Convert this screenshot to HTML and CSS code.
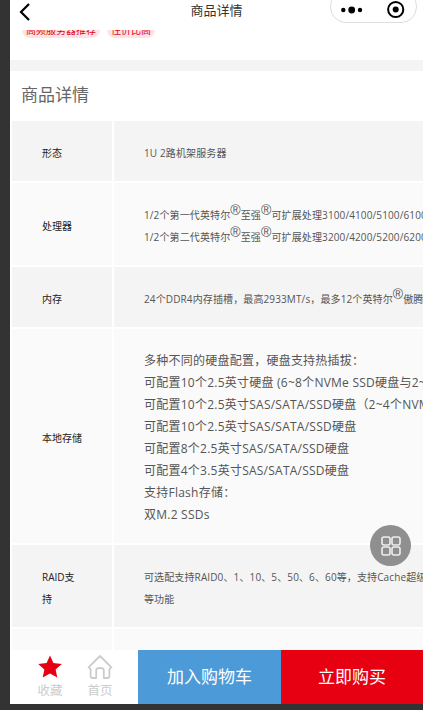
FILE: index.html
```html
<!DOCTYPE html>
<html lang="zh-CN">
<head>
    <meta charset="UTF-8">
    <meta name="viewport" content="width=device-width, initial-scale=1.0">
    <title>商品详情</title>
    <link rel="stylesheet" href="styles.css">
</head>
<body>
    <div class="screen">
        <!-- 顶部导航 -->
        <div class="nav">
            <svg class="nav-back" width="12" height="20" viewBox="0 0 12 20">
                <path d="M10 2 L2 10 L10 18" fill="none" stroke="#000" stroke-width="2.2"/>
            </svg>
            <div class="nav-title">商品详情</div>
            <div class="capsule">
                <svg width="70" height="20" viewBox="0 0 70 20">
                    <circle cx="3.3" cy="10" r="2.2" fill="#000"/>
                    <circle cx="11.7" cy="10" r="3.4" fill="#000"/>
                    <circle cx="20" cy="10" r="2.2" fill="#000"/>
                    <circle cx="55.7" cy="9.5" r="7.6" fill="none" stroke="#000" stroke-width="2"/>
                    <circle cx="55.7" cy="9.5" r="3" fill="#000"/>
                </svg>
            </div>
        </div>

        <div class="main">
            <div class="tags">
                <span class="tag">高频服务器推荐</span>
                <span class="tag">性价比高</span>
            </div>

            <div class="detail">
                <h2>商品详情</h2>
                <table class="spec-table">
                    <tr>
                        <th>形态</th>
                        <td>1U 2路机架服务器</td>
                    </tr>
                    <tr>
                        <th>处理器</th>
                        <td>
                            1/2个第一代英特尔<sup>®</sup>至强<sup>®</sup>可扩展处理3100/4100/5100/6100系列<br>
                            1/2个第二代英特尔<sup>®</sup>至强<sup>®</sup>可扩展处理3200/4200/5200/6200系列
                        </td>
                    </tr>
                    <tr>
                        <th>内存</th>
                        <td>24个DDR4内存插槽，最高2933MT/s，最多12个英特尔<sup>®</sup>傲腾内存</td>
                    </tr>
                    <tr>
                        <th>本地存储</th>
                        <td class="big-text">
                            多种不同的硬盘配置，硬盘支持热插拔：<br>
                            可配置10个2.5英寸硬盘 (6~8个NVMe SSD硬盘与2~4个SAS/SATA硬盘)<br>
                            可配置10个2.5英寸SAS/SATA/SSD硬盘（2~4个NVMe SSD硬盘）<br>
                            可配置10个2.5英寸SAS/SATA/SSD硬盘<br>
                            可配置8个2.5英寸SAS/SATA/SSD硬盘<br>
                            可配置4个3.5英寸SAS/SATA/SSD硬盘<br>
                            支持Flash存储：<br>
                            双M.2 SSDs
                        </td>
                    </tr>
                    <tr>
                        <th>RAID支持</th>
                        <td>可选配支持RAID0、1、10、5、50、6、60等，支持Cache超级电容保护<br>等功能</td>
                    </tr>
                    <tr>
                        <th></th>
                        <td></td>
                    </tr>
                </table>
            </div>
        </div>

        <!-- 悬浮按钮 -->
        <div class="float-btn">
            <svg width="20" height="20" viewBox="0 0 20 20" fill="none" stroke="#eee" stroke-width="1.6">
                <rect x="1" y="1" width="8" height="8" rx="2"/>
                <rect x="11" y="1" width="8" height="8" rx="2"/>
                <rect x="1" y="11" width="8" height="8" rx="2"/>
                <rect x="11" y="11" width="8" height="8" rx="2"/>
            </svg>
        </div>

        <!-- 底部操作栏 -->
        <div class="footer">
            <div class="footer-links">
                <div class="footer-link">
                    <svg width="26" height="24" viewBox="0 0 26 24">
                        <path d="M13 0.5 L16.4 8 L24.8 8.9 L18.6 14.4 L20.3 22.6 L13 18.4 L5.7 22.6 L7.4 14.4 L1.2 8.9 L9.6 8 Z" fill="#e60012"/>
                    </svg>
                    <span>收藏</span>
                </div>
                <div class="footer-link">
                    <svg width="26" height="24" viewBox="0 0 26 24">
                        <path d="M13 1 L1.6 12.4 L3.6 14 L3.6 21 Q3.6 23 5.6 23 L9.2 23 L9.2 15 Q9.2 13 13 13 Q16.8 13 16.8 15 L16.8 23 L20.4 23 Q22.4 23 22.4 21 L22.4 14 L24.4 12.4 Z" fill="none" stroke="#ccc" stroke-width="1.8" stroke-linejoin="round"/>
                    </svg>
                    <span>首页</span>
                </div>
            </div>
            <div class="btn btn-cart">加入购物车</div>
            <div class="btn btn-buy">立即购买</div>
        </div>
    </div>
</body>
</html>
```

FILE: styles.css
```css
/* 基本スタイル */
html, body {
    height: 100%;
    margin: 0;
}
body {
    background-color: #333;
    font-family: "Open Sans", "Noto Sans CJK SC", sans-serif;
    overflow: hidden;
}
.screen {
    position: relative;
    display: flex;
    flex-direction: column;
    height: 704px;
    margin-left: 10px;
    background-color: #fff;
    overflow: hidden;
}

/* ナビゲーション */
.nav {
    display: grid;
    grid-template-columns: 1fr auto 1fr;
    flex: none;
    height: 30px;
    background-color: #fff;
    overflow: hidden;
}
.nav-back {
    margin: 2px 0 0 9px;
}
.nav-title {
    font-size: 13px;
    line-height: 20px;
    color: #333;
}
.capsule {
    justify-self: end;
    box-sizing: border-box;
    width: 87px;
    height: 33px;
    margin: -10px 6px 0 0;
    padding: 9px 0 0 9px;
    border: 1px solid #ddd;
    border-radius: 16px;
}
.capsule svg {
    display: block;
}

/* コンテンツ */
.main {
    flex: 1;
    min-height: 0;
    overflow: hidden;
    background-color: #f4f4f4;
}
.tags {
    display: flex;
    gap: 7px;
    padding: 0 12px 22px;
    background-color: #fff;
}
.tag {
    margin-top: -8px;
    padding: 0 4px;
    font-size: 10px;
    line-height: 16px;
    color: #e60012;
    background-color: #fde3e6;
    border-radius: 8px;
}
.detail {
    margin-top: 11px;
    background-color: #fff;
}
.detail h2 {
    margin: 0;
    padding-left: 11px;
    font-size: 17px;
    font-weight: 400;
    line-height: 47px;
    height: 48px;
    color: #666;
}
.spec-table {
    width: 800px;
    table-layout: fixed;
    border-spacing: 2px;
    font-size: 10px;
    line-height: 22px;
}
.spec-table th, .spec-table td {
    padding: 21px 30px 17px;
    text-align: left;
    font-weight: normal;
}
.spec-table th {
    width: 40px;
    color: #222;
}
.spec-table td {
    color: #555;
    white-space: nowrap;
    letter-spacing: 0.12px;
}
.spec-table tr:nth-child(odd) th, .spec-table tr:nth-child(odd) td {
    background-color: #f4f4f4;
}
.spec-table tr:nth-child(even) th, .spec-table tr:nth-child(even) td {
    background-color: #fafafa;
}
.spec-table td.big-text {
    font-size: 12px;
    letter-spacing: 0.24px;
}
.spec-table sup {
    font-family: "Liberation Sans", sans-serif;
    font-size: 14px;
    line-height: 0;
}

/* フローティングボタン */
.float-btn {
    position: absolute;
    top: 525px;
    right: 12px;
    display: flex;
    align-items: center;
    justify-content: center;
    width: 41px;
    height: 41px;
    background-color: #8f8f8f;
    border-radius: 50%;
}

/* 下部バー */
.footer {
    display: flex;
    flex: none;
    height: 54px;
    background-color: #fff;
}
.footer-links {
    display: flex;
    width: 113px;
    padding-left: 15px;
}
.footer-link {
    display: flex;
    flex-direction: column;
    align-items: center;
    width: 50px;
    padding-top: 5px;
    font-size: 12.5px;
    line-height: 15px;
    color: #ccc;
}
.footer-link svg {
    display: block;
    margin-bottom: 4px;
}
.btn {
    font-size: 17px;
    line-height: 53px;
    text-align: center;
    color: #fff;
}
.btn-cart {
    width: 143px;
    background-color: #4d9ad9;
}
.btn-buy {
    flex: 1;
    background-color: #e60012;
}
```
